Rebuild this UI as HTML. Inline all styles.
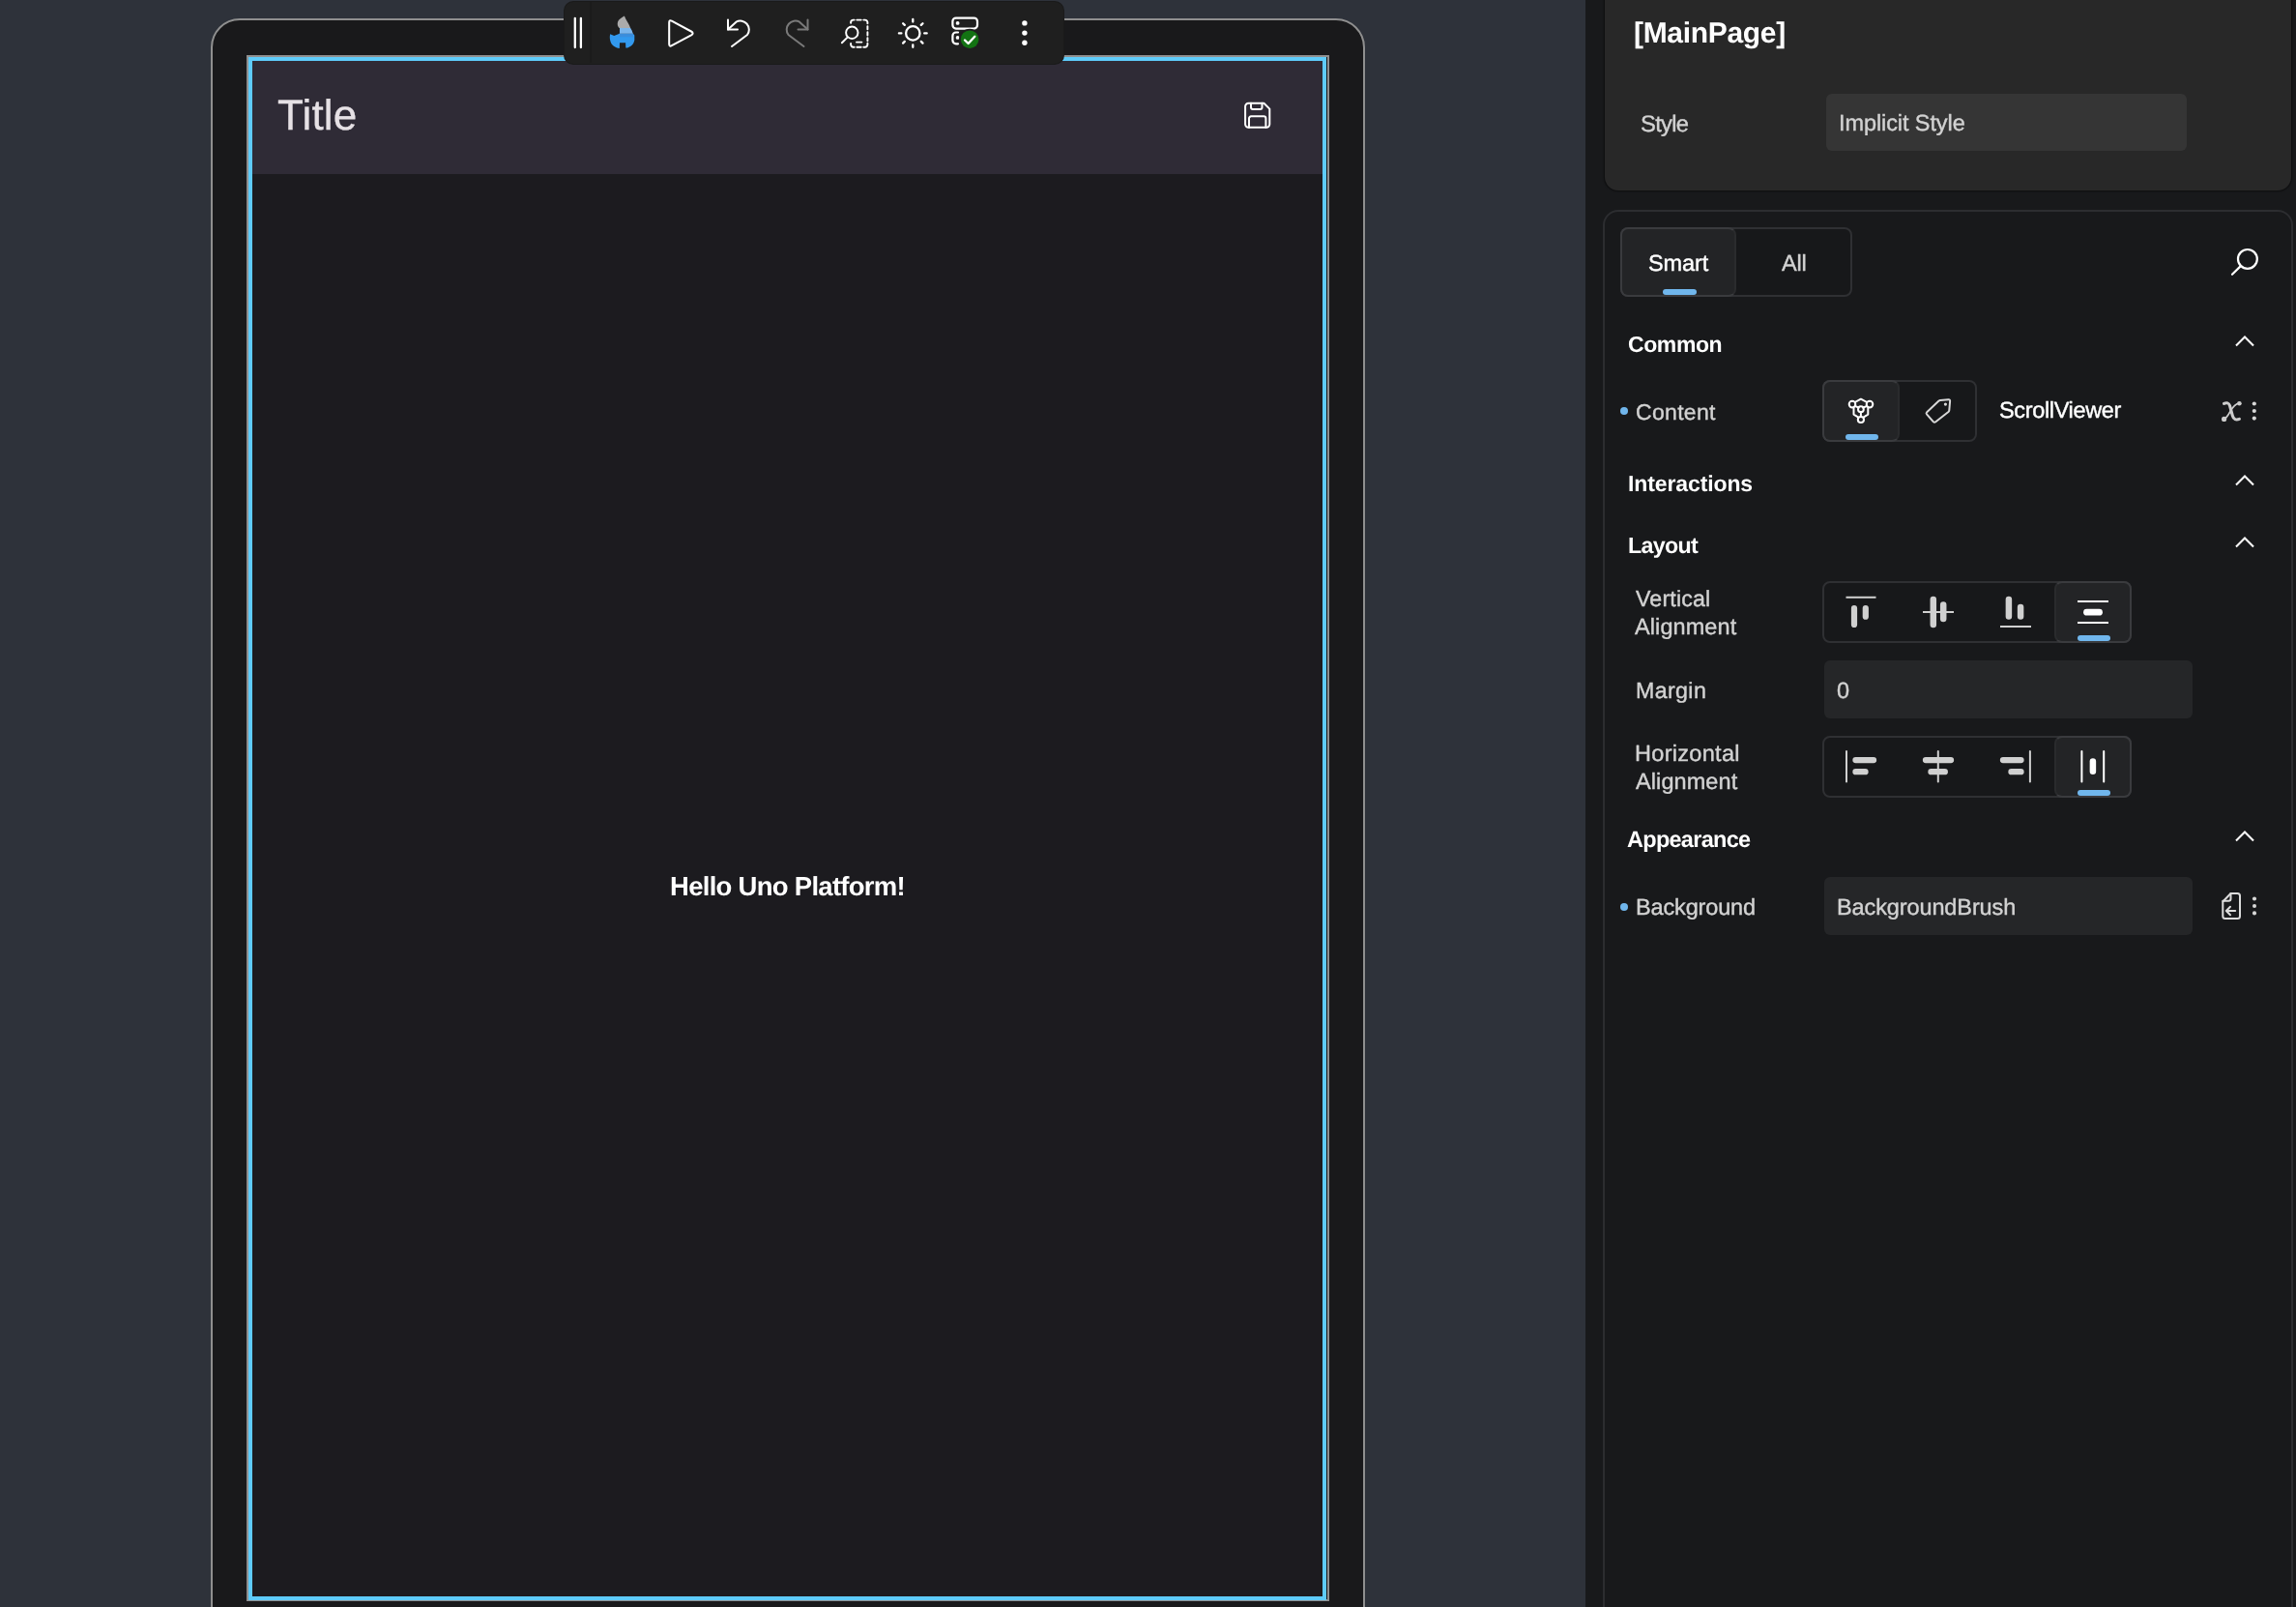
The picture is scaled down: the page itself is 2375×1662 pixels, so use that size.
<!DOCTYPE html>
<html><head><meta charset="utf-8"><style>
html,body{margin:0;padding:0;width:2375px;height:1662px;overflow:hidden;background:#18191b}
.b{position:absolute}
.t{position:absolute;white-space:pre;font-family:'Liberation Sans',sans-serif;text-rendering:geometricPrecision;will-change:transform}
svg.ov{position:absolute;left:0;top:0}
</style></head><body>
<div class="b" style="left:0px;top:0px;width:1640px;height:1662px;background:#2e323a;"></div>
<div class="b" style="left:218px;top:19px;width:1194px;height:1700px;background:#19191b;border:2px solid #8f8f8f;box-sizing:border-box;border-radius:30px;"></div>
<div class="b" style="left:255px;top:57px;width:1120px;height:1599px;background:#19191b;border:2px solid #8f8f8f;box-sizing:border-box;"></div>
<div class="b" style="left:257px;top:59px;width:1115px;height:1596px;background:#5ecbfa;"></div>
<div class="b" style="left:261px;top:63px;width:1107px;height:1588px;background:#1c1b1f;"></div>
<div class="b" style="left:261px;top:63px;width:1107px;height:117px;background:#2f2b36;"></div>
<div class="t" style="left:286.83px;top:98px;font-size:44.0px;line-height:44.0px;font-weight:normal;letter-spacing:0.18px;color:#e6e1e5;-webkit-text-stroke:0.3px #e6e1e5">Title</div>
<div class="t" style="left:692.91px;top:903px;font-size:27.5px;line-height:27.5px;font-weight:bold;letter-spacing:-0.72px;color:#ffffff;-webkit-text-stroke:0.0px #ffffff">Hello Uno Platform!</div>
<div class="b" style="left:584.2px;top:2px;width:515.5px;height:63.5px;background:#1f1f1f;border-radius:9px;box-shadow:0 0 0 1px #1a1a1a;"></div>
<div class="b" style="left:610px;top:2px;width:2px;height:63px;background:#1b1b1b;"></div>
<div class="b" style="left:1640px;top:0px;width:735px;height:1662px;background:#18191b;"></div>
<div class="b" style="left:1660px;top:-20px;width:710px;height:217px;background:#282828;border-radius:14px;box-shadow:0 0 1.5px 0.5px rgba(0,0,0,0.45);"></div>
<div class="t" style="left:1689.68px;top:20px;font-size:30.0px;line-height:30.0px;font-weight:bold;letter-spacing:-0.31px;color:#ffffff;-webkit-text-stroke:0.0px #ffffff">[MainPage]</div>
<div class="t" style="left:1697.14px;top:117px;font-size:23.75px;line-height:23.75px;font-weight:normal;letter-spacing:-0.7px;color:#d2d2d2;-webkit-text-stroke:0.4px #d2d2d2">Style</div>
<div class="b" style="left:1889px;top:97px;width:373px;height:59px;background:#353535;border-radius:6px;"></div>
<div class="t" style="left:1902.35px;top:116px;font-size:23.5px;line-height:23.5px;font-weight:normal;letter-spacing:-0.09px;color:#d2d2d2;-webkit-text-stroke:0.4px #d2d2d2">Implicit Style</div>
<div class="b" style="left:1658px;top:217px;width:714px;height:1500px;background:transparent;border:2px solid #2c2d30;border-radius:16px;box-sizing:border-box;"></div>
<div class="b" style="left:1676px;top:235px;width:240px;height:72px;background:#17181a;border:2px solid #2f3033;border-radius:8px;box-sizing:border-box;"></div>
<div class="b" style="left:1676px;top:235px;width:120px;height:72px;background:#232426;border:2px solid #3a3b3e;border-right-color:#2a2b2d;border-radius:8px;box-sizing:border-box;"></div>
<div class="b" style="left:1720px;top:299px;width:34.5px;height:6px;background:#70b6ec;border-radius:3px;"></div>
<div class="t" style="left:1704.61px;top:261px;font-size:23.5px;line-height:23.5px;font-weight:normal;letter-spacing:-0.07px;color:#ffffff;-webkit-text-stroke:0.4px #ffffff">Smart</div>
<div class="t" style="left:1842.79px;top:261px;font-size:23.5px;line-height:23.5px;font-weight:normal;letter-spacing:-0.25px;color:#d2d2d2;-webkit-text-stroke:0.4px #d2d2d2">All</div>
<div class="t" style="left:1684.04px;top:345px;font-size:23.0px;line-height:23.0px;font-weight:bold;letter-spacing:-0.4px;color:#ffffff;-webkit-text-stroke:0.0px #ffffff">Common</div>
<div class="b" style="left:1676px;top:421px;width:8px;height:8px;background:#70b6ec;border-radius:50%;"></div>
<div class="t" style="left:1691.62px;top:415px;font-size:23.0px;line-height:23.0px;font-weight:normal;letter-spacing:0.32px;color:#d2d2d2;-webkit-text-stroke:0.4px #d2d2d2">Content</div>
<div class="b" style="left:1885px;top:393px;width:160px;height:64px;background:#17181a;border:2px solid #2f3033;border-radius:8px;box-sizing:border-box;"></div>
<div class="b" style="left:1885px;top:393px;width:80px;height:64px;background:#232426;border:2px solid #3a3b3e;border-right-color:#2a2b2d;border-radius:8px;box-sizing:border-box;"></div>
<div class="b" style="left:1909px;top:449px;width:34px;height:6px;background:#70b6ec;border-radius:3px;"></div>
<div class="t" style="left:2068.21px;top:413px;font-size:23.5px;line-height:23.5px;font-weight:normal;letter-spacing:-0.35px;color:#ffffff;-webkit-text-stroke:0.4px #ffffff">ScrollViewer</div>
<div class="t" style="left:1683.53px;top:489px;font-size:23.0px;line-height:23.0px;font-weight:bold;letter-spacing:-0.11px;color:#ffffff;-webkit-text-stroke:0.0px #ffffff">Interactions</div>
<div class="t" style="left:1683.7px;top:553px;font-size:23.25px;line-height:23.25px;font-weight:bold;letter-spacing:-0.67px;color:#ffffff;-webkit-text-stroke:0.0px #ffffff">Layout</div>
<div class="t" style="left:1691.73px;top:608px;font-size:23.25px;line-height:23.25px;font-weight:normal;letter-spacing:0.13px;color:#d2d2d2;-webkit-text-stroke:0.4px #d2d2d2">Vertical</div>
<div class="t" style="left:1691.49px;top:637px;font-size:23.5px;line-height:23.5px;font-weight:normal;letter-spacing:0.09px;color:#d2d2d2;-webkit-text-stroke:0.4px #d2d2d2">Alignment</div>
<div class="b" style="left:1885px;top:601px;width:320px;height:64px;background:#17181a;border:2px solid #2f3033;border-radius:8px;box-sizing:border-box;"></div>
<div class="b" style="left:2125px;top:601px;width:80px;height:64px;background:#232426;border:2px solid #3a3b3e;border-left-color:#2a2b2d;border-radius:8px;box-sizing:border-box;"></div>
<div class="b" style="left:2148.5px;top:657px;width:34.5px;height:6px;background:#70b6ec;border-radius:3px;"></div>
<div class="t" style="left:1691.64px;top:703px;font-size:23.25px;line-height:23.25px;font-weight:normal;letter-spacing:0.35px;color:#d2d2d2;-webkit-text-stroke:0.4px #d2d2d2">Margin</div>
<div class="b" style="left:1887px;top:683px;width:381px;height:60px;background:#252628;border-radius:6px;"></div>
<div class="t" style="left:1900.04px;top:703px;font-size:23.5px;line-height:23.5px;font-weight:normal;letter-spacing:0px;color:#d2d2d2;-webkit-text-stroke:0.4px #d2d2d2">0</div>
<div class="t" style="left:1691.12px;top:768px;font-size:23.5px;line-height:23.5px;font-weight:normal;letter-spacing:0.3px;color:#d2d2d2;-webkit-text-stroke:0.4px #d2d2d2">Horizontal</div>
<div class="t" style="left:1691.59px;top:797px;font-size:23.5px;line-height:23.5px;font-weight:normal;letter-spacing:0.09px;color:#d2d2d2;-webkit-text-stroke:0.4px #d2d2d2">Alignment</div>
<div class="b" style="left:1885px;top:761px;width:320px;height:64px;background:#17181a;border:2px solid #2f3033;border-radius:8px;box-sizing:border-box;"></div>
<div class="b" style="left:2125px;top:761px;width:80px;height:64px;background:#232426;border:2px solid #3a3b3e;border-left-color:#2a2b2d;border-radius:8px;box-sizing:border-box;"></div>
<div class="b" style="left:2149px;top:817px;width:34px;height:6px;background:#70b6ec;border-radius:3px;"></div>
<div class="t" style="left:1683.2px;top:857px;font-size:23.5px;line-height:23.5px;font-weight:bold;letter-spacing:-0.72px;color:#ffffff;-webkit-text-stroke:0.0px #ffffff">Appearance</div>
<div class="b" style="left:1676px;top:933.5px;width:8px;height:8px;background:#70b6ec;border-radius:50%;"></div>
<div class="t" style="left:1691.72px;top:927px;font-size:23.5px;line-height:23.5px;font-weight:normal;letter-spacing:-0.15px;color:#d2d2d2;-webkit-text-stroke:0.4px #d2d2d2">Background</div>
<div class="b" style="left:1887px;top:907px;width:381px;height:60px;background:#252628;border-radius:6px;"></div>
<div class="t" style="left:1900.42px;top:927px;font-size:23.5px;line-height:23.5px;font-weight:normal;letter-spacing:-0.11px;color:#d2d2d2;-webkit-text-stroke:0.4px #d2d2d2">BackgroundBrush</div>
<svg class="ov" width="2375" height="1662" viewBox="0 0 2375 1662" fill="none" stroke-linecap="round" stroke-linejoin="round">
<!-- grip -->
<g stroke="#fff" stroke-width="2.3"><path d="M594.8 18.8V49M600.9 18.8V49"/></g>
<!-- play -->
<path d="M692.2 23.2 Q692.2 20.2 694.8 21.6 L715 32.5 Q718.2 34.4 715 36.3 L694.8 47.2 Q692.2 48.6 692.2 45.6 Z" stroke="#fff" stroke-width="2.05"/>
<!-- undo -->
<g stroke="#fff" stroke-width="2"><path d="M753 20.5V30.5H763"/><path d="M753 30.5L761.5 22.7A9 9 0 0 1 773 36L757 48"/></g>
<!-- redo -->
<g stroke="#7a7a7a" stroke-width="2"><path d="M835.5 20.5V30.5H825.5"/><path d="M835.5 30.5L827 22.7A9 9 0 0 0 815.5 36L831.5 48"/></g>
<!-- zoom select -->
<g stroke="#fff" stroke-width="1.95" stroke-linecap="round">
<path d="M880.1 23.8V23.2A2.6 2.6 0 0 1 882.7 20.6H883.7"/>
<path d="M886.3 20.6H890.7"/>
<path d="M893.3 20.6H894.8A2.6 2.6 0 0 1 897.4 23.2V24.2"/>
<path d="M897.4 27.1V30.2M897.4 33.2V36.5M897.4 39.1V42.2"/>
<path d="M897.4 44.8V46.1A2.6 2.6 0 0 1 894.8 48.7H893.3"/>
<path d="M890.7 48.7H886.4"/>
<path d="M883.7 48.7H882.7A2.6 2.6 0 0 1 880.1 46.1V44.9"/>
<path d="M886 43.6H891.4"/>
<circle cx="881.3" cy="33.8" r="6.2"/>
<path d="M876.6 38.6L870.9 44.3"/>
</g>
<!-- sun -->
<g stroke="#fff" stroke-width="2.3"><circle cx="944.3" cy="34.4" r="7.2"/>
<path d="M944.3 20V22.5M944.3 46.3V48.8M929.9 34.4H932.4M956.2 34.4H958.7M934.1 24.2L935.8 25.9M952.8 42.9L954.5 44.6M934.1 44.6L935.8 42.9M952.8 25.9L954.5 24.2"/></g>
<!-- server -->
<g stroke="#fff" stroke-width="2.2"><rect x="985.4" y="18.6" width="25.6" height="11" rx="3.5"/><path d="M991 33.5H988.9A3.5 3.5 0 0 0 985.4 37V41.8A3.5 3.5 0 0 0 988.9 45.3H991"/></g>
<circle cx="990.6" cy="23.9" r="1.9" fill="#fff"/><circle cx="990.6" cy="38.9" r="1.9" fill="#fff"/>
<circle cx="1003.1" cy="40.7" r="11" fill="#1f1f1f"/>
<circle cx="1003.1" cy="40.7" r="9.3" fill="#137313"/>
<path d="M998 41.5L1001.6 45L1008.3 37.8" stroke="#fff" stroke-width="2.4"/>
<!-- more -->
<g fill="#fff"><circle cx="1059.9" cy="23.9" r="2.7"/><circle cx="1059.9" cy="34.1" r="2.7"/><circle cx="1059.9" cy="44.2" r="2.7"/></g>
<!-- flame -->
<defs><filter id="fb" x="-20%" y="-20%" width="140%" height="140%"><feGaussianBlur stdDeviation="0.45"/></filter></defs>
<g filter="url(#fb)">
<path d="M631.2 35.3 L635.2 36.9 L639.7 35.3 L641 34.6 L654.7 34.6 L656.3 36.6 L656.3 41.5 C655.7 45 653.5 48 649.1 49.4 L647.3 49.4 L647.1 44.2 L641 44.2 L640.8 50 C636.5 49.4 632.6 46.6 631.6 43.2 C630.6 40.3 630.6 37.6 631.2 35.3 Z" fill="#3399ee"/>
<path d="M641 35 H655 V38.2 H641 Z" fill="#3b8ddc"/>
<path d="M641 28.6 L651.9 28.6 C653.2 30.5 654.2 32.5 654.8 34.7 L641 34.7 Z" fill="#7ab5ec"/>
<path d="M645.9 16.5 C643.2 18 639.8 20 639 22.7 C638.3 25.4 639 27.4 640.6 28.9 L652 28.9 C651.2 26.3 650.2 24.5 648.9 22.6 C647.6 20.6 646.7 18.6 645.9 16.5 Z" fill="#ababab"/>
</g>
<!-- save -->
<g stroke="#fff" stroke-width="2"><path d="M1291.5 106.7H1307.4L1313.3 112.6V128.5A3.2 3.2 0 0 1 1310.1 131.7H1291.3A3.2 3.2 0 0 1 1288.1 128.5V110.1A3.4 3.4 0 0 1 1291.5 106.7Z"/><path d="M1294 106.7V111A2 2 0 0 0 1296 113H1303.5A2 2 0 0 0 1305.5 111V106.7"/><path d="M1292 131.7V122.5A2.2 2.2 0 0 1 1294.2 120.3H1307.2A2.2 2.2 0 0 1 1309.4 122.5V131.7"/></g>
<!-- search -->
<g stroke="#fff" stroke-width="2.2"><circle cx="2324.9" cy="267.9" r="9.9"/><path d="M2317.3 275.6L2309 283.8"/></g>
<!-- chevrons -->
<g stroke="#fff" stroke-width="2.1" stroke-linecap="butt" stroke-linejoin="miter"><path d="M2313 357.5L2322 348.5L2331 357.5"/><path d="M2313 501.5L2322 492.5L2331 501.5"/><path d="M2313 565.5L2322 556.5L2331 565.5"/><path d="M2313 869.5L2322 860.5L2331 869.5"/></g>
<!-- molecule -->
<g stroke="#fff" stroke-width="2"><circle cx="1916" cy="418.1" r="3.3"/><circle cx="1934" cy="418.1" r="3.3"/><circle cx="1924.9" cy="423.2" r="2.9"/><circle cx="1924.9" cy="434" r="3.1"/>
<path d="M1919 415.8L1924.9 412.7L1930.9 415.8M1917.5 421.4V428.6L1921.9 431.3M1932.3 421.4V428.6L1927.9 431.3M1924.9 426.1V430.9M1919.1 420L1922.6 421.6M1930.9 420L1927.2 421.6"/></g>
<!-- tag -->
<g stroke="#d8d8d8" stroke-width="2"><path d="M2007 413.9 L2015.6 413.3 Q2017.3 413.2 2017.1 415 L2016.3 424.3 Q2016.2 425.3 2015.4 426 L2002.3 436.3 Q2000.9 437.4 1999.8 436.1 L1993 428.3 Q1992.1 427.2 1993.2 426.2 L2005.6 414.6 Q2006.2 414 2007 413.9 Z"/></g>
<circle cx="2012.4" cy="418.1" r="1.6" fill="#d8d8d8"/>
<!-- x italic -->
<g stroke="#cdcdcd" fill="none" stroke-linecap="round">
<path d="M2300.5 417.4 C2303.2 416.2 2305.6 416.4 2306.6 419.8 L2309.4 430.2 C2310.4 433.8 2313 434.8 2316.4 433.4" stroke-width="3.1"/>
<path d="M2316.4 416.8 C2312.2 417.6 2309.4 421.2 2307 425.5 C2305 429.2 2302.8 433 2300.2 433.6" stroke-width="1.7"/>
</g>
<circle cx="2316.4" cy="417.2" r="2.3" fill="#cdcdcd"/><circle cx="2300.6" cy="433.4" r="2.6" fill="#cdcdcd"/>
<g fill="#d8d8d8"><circle cx="2331.8" cy="417.5" r="2.1"/><circle cx="2331.8" cy="425" r="2.1"/><circle cx="2331.8" cy="432.6" r="2.1"/></g>
<!-- vertical align icons -->
<g stroke="#d0d0d0" stroke-linecap="round">
<path d="M1909.5 617.8H1940.5" stroke-width="2" stroke-linecap="butt"/>
<path d="M1918 629V646M1929.8 629V637.7" stroke-width="6.2"/>
<path d="M1989 633H2021" stroke-width="2" stroke-linecap="butt"/>
<path d="M1999.8 620V646M2010.2 625.5V640" stroke-width="6.5"/>
<path d="M2069 648H2101" stroke-width="2" stroke-linecap="butt"/>
<path d="M2077.9 620V637.5M2090.1 628V637.5" stroke-width="6.5"/>
</g>
<g stroke="#fff"><path d="M2149 622H2181M2149 643.9H2181" stroke-width="2" stroke-linecap="butt"/><path d="M2158.5 633.2H2171.5" stroke-width="6.8"/></g>
<!-- horizontal align icons -->
<g stroke="#d0d0d0">
<path d="M1910 777V808.5" stroke-width="2"/>
<path d="M1919.5 786.1H1938M1919.5 798.2H1929.5" stroke-width="6.3" stroke-linecap="round"/>
<path d="M2004.8 777V808.5" stroke-width="2"/>
<path d="M1992 786.1H2018M1997.5 798.2H2011.8" stroke-width="6.3" stroke-linecap="round"/>
<path d="M2099.9 777V808.5" stroke-width="2"/>
<path d="M2072 786.1H2090.5M2080.5 798.2H2090.5" stroke-width="6.3" stroke-linecap="round"/>
</g>
<g stroke="#fff"><path d="M2153.4 777V808.5M2176.2 777V808.5" stroke-width="2"/><path d="M2164.9 787.5V797.8" stroke-width="6.5" stroke-linecap="round"/></g>
<!-- resource icon -->
<g stroke="#dcdcdc" stroke-width="2"><path d="M2307.5 924H2314.5A2.5 2.5 0 0 1 2317 926.5V947.5A2.5 2.5 0 0 1 2314.5 950H2301.8A2.5 2.5 0 0 1 2299.3 947.5V932.5Z"/><path d="M2307.5 924V929.5A2.3 2.3 0 0 1 2305.2 931.8H2299.3"/><path d="M2312.2 942H2303M2307 937.8L2302.8 942L2307 946.2"/></g>
<g fill="#d8d8d8"><circle cx="2332" cy="929.5" r="2.05"/><circle cx="2332" cy="937" r="2.05"/><circle cx="2332" cy="944.4" r="2.05"/></g>
</svg>

</body></html>
